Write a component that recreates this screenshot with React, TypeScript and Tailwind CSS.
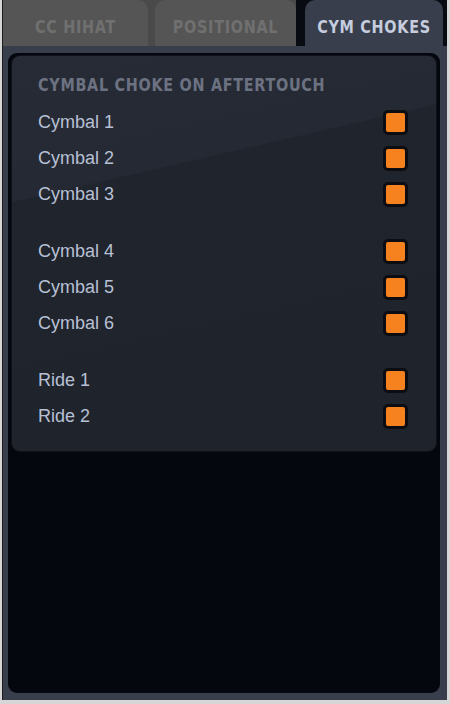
import React from "react";

const condensed = {
  fontFamily: '"DejaVu Sans Condensed", "DejaVu Sans", sans-serif',
  fontStretch: "condensed" as const,
};

function Check() {
  return (
    <div className="w-[25px] h-[25px] rounded-[5px] border-[3px] border-[#0b0d12] bg-[#f5821f]" />
  );
}

function Row({ label }: { label: string }) {
  return (
    <div className="h-[36px] flex items-center justify-between">
      <span
        className="text-[18px] text-[#b7c0d4]"
        style={{ fontFamily: '"Liberation Sans", Arial, sans-serif' }}
      >
        {label}
      </span>
      <Check />
    </div>
  );
}

export default function App() {
  const groups = [
    ["Cymbal 1", "Cymbal 2", "Cymbal 3"],
    ["Cymbal 4", "Cymbal 5", "Cymbal 6"],
    ["Ride 1", "Ride 2"],
  ];
  return (
    <div className="w-[450px] h-[704px] bg-[#d6d6d6] pl-[2px] pr-[3px] pb-[4px] flex flex-col">
      <div className="flex-1 flex flex-col border-l border-[#1c1c1c] bg-[#080b12]">
        {/* tab row */}
        <div className="h-[46px] flex shrink-0">
          <div className="w-[293px] bg-[#4a4a4a] flex gap-[7px]">
            <div
              className="w-[145px] bg-[#555555] rounded-tr-[10px] flex items-center justify-center pt-[8px] font-bold text-[16px] tracking-[0.7px] text-[#707070]"
              style={condensed}
            >
              <span className="inline-block scale-y-[1.15]">CC HIHAT</span>
            </div>
            <div
              className="w-[141px] bg-[#555555] rounded-t-[10px] flex items-center justify-center pt-[8px] font-bold text-[16px] tracking-[0.7px] text-[#707070]"
              style={condensed}
            >
              <span className="inline-block scale-y-[1.15]">POSITIONAL</span>
            </div>
          </div>
          <div className="w-[9px]" />
          <div
            className="w-[138px] bg-[#383e4c] rounded-t-[10px] flex items-center justify-center pt-[8px] font-bold text-[16px] tracking-[0.7px] text-[#c4ccde]"
            style={condensed}
          >
            <span className="inline-block scale-y-[1.15]">CYM CHOKES</span>
          </div>
        </div>
        {/* frame */}
        <div className="flex-1 bg-[#383e4c] pl-[5px] pr-[7px] pt-[7px] pb-[7px] flex flex-col">
          <div className="flex-1 bg-[#04070e] rounded-[9px] px-[3px] pt-[2px] flex flex-col">
            <div className="rounded-[9px] bg-[linear-gradient(167deg,#272b35_0%,#252933_29.5%,#20242d_29.8%,#1f232c_100%)] pl-[26px] pr-[28px] pt-[19px] pb-[17px] border border-[#0e1117]">
              <div
                className="h-[20px] flex items-center font-bold text-[16px] tracking-[0.7px] text-[#6c7282]"
                style={condensed}
              >
                <span className="inline-block scale-y-[1.15]">CYMBAL CHOKE ON AFTERTOUCH</span>
              </div>
              <div className="mt-[9px] flex flex-col gap-[21px]">
                {groups.map((g, i) => (
                  <div key={i} className="flex flex-col">
                    {g.map((l) => (
                      <Row key={l} label={l} />
                    ))}
                  </div>
                ))}
              </div>
            </div>
          </div>
        </div>
      </div>
    </div>
  );
}
